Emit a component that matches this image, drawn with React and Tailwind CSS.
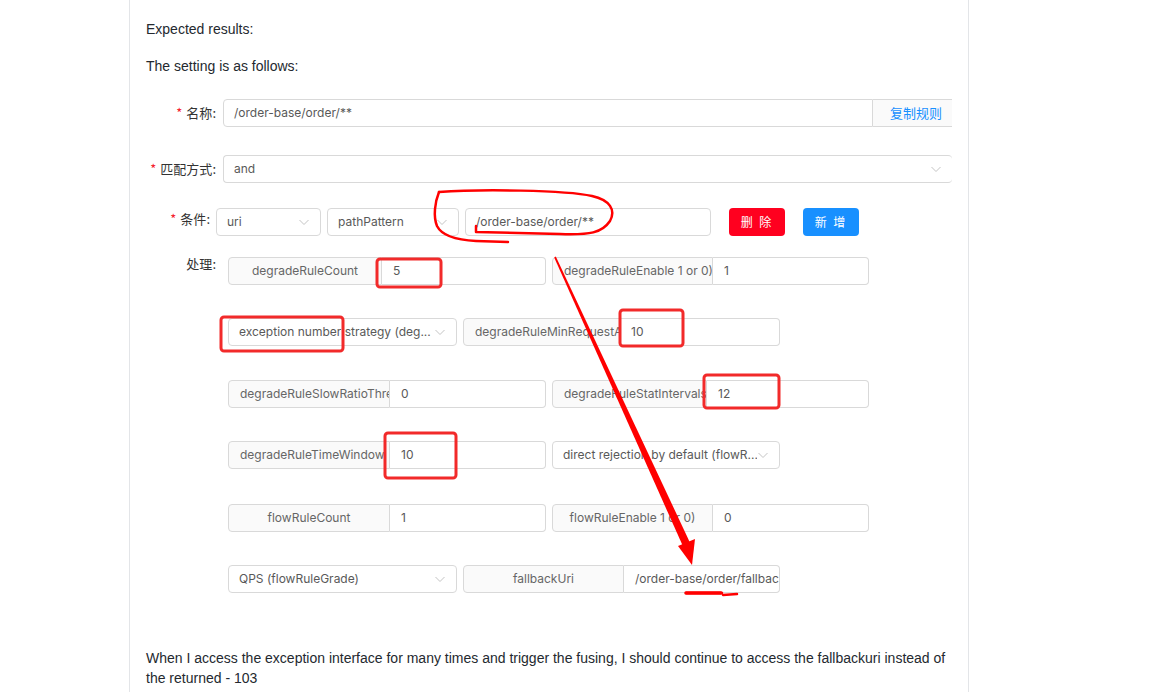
import React from 'react';

/**
 * Issue comment with an embedded rule-config screenshot and red markup on top
 */

const Chevron = () => (
  <svg width="12" height="12" viewBox="0 0 12 12" className="shrink-0">
    <path d="M1.5 4 L6 8.5 L10.5 4" fill="none" stroke="#c4c4c4" strokeWidth="1" />
  </svg>
);

function Select({ text, w, last }) {
  return (
    <div
      className={`${w} h-[28px] flex items-center justify-between bg-white border-[#d9d9d9] border-y border-l ${
        last ? '' : 'border-r'
      } rounded-[4px] pl-[10px] pr-[10px] text-[#595959] whitespace-nowrap overflow-hidden`}
    >
      <span className="overflow-hidden">{text}</span>
      <Chevron />
    </div>
  );
}

function Group({ label, value, lw, iw }) {
  return (
    <div className="flex h-[28px]">
      <div
        className={`${lw} h-full border border-[#d9d9d9] rounded-l-[4px] bg-[#fafafa] text-[#666] px-[11px] text-center whitespace-nowrap overflow-hidden leading-[26px]`}
      >
        {label}
      </div>
      <div
        className={`${iw} h-full border border-l-0 border-[#d9d9d9] rounded-r-[4px] bg-white text-[#595959] px-[11px] whitespace-nowrap overflow-hidden leading-[26px]`}
      >
        {value}
      </div>
    </div>
  );
}

function Label({ text, w, req = true }) {
  return (
    <div className={`${w} shrink-0 text-right text-[#333] font-['Noto_Sans_CJK_SC',sans-serif] text-[13px] whitespace-nowrap`}>
      {req && <span className="text-[#f5222d] mr-[4px]">*</span>}
      {text}:
    </div>
  );
}

function Markup() {
  return (
    <svg
      className="absolute inset-0 pointer-events-none"
      width="1169"
      height="692"
      viewBox="0 0 1169 692"
    >
      <g fill="none" stroke="#f22a2a" strokeWidth="3" strokeLinejoin="round">
        <rect x="377" y="259" width="64" height="28" rx="3" />
        <rect x="221" y="317" width="122" height="34" rx="3" />
        <rect x="620" y="310" width="63" height="36" rx="3" />
        <rect x="704" y="375" width="75" height="33" rx="3" />
        <rect x="385" y="433" width="71" height="45" rx="3" />
      </g>
      <g fill="none" stroke="#ff0000" strokeWidth="2.5" strokeLinecap="round" strokeLinejoin="round">
        <path d="M439 192 C435 202 433 216 437 226 C442 236 456 240 476 241 L508 242" />
        <path d="M439 192 C480 189 565 190 592 196 C610 200 616 210 610 221 C602 233 590 235 560 234 L476 232 L476 226" />
        <path d="M686 593 L722 593 M723 595 L737 594" />
      </g>
      <g fill="none" stroke="#ff0000" strokeWidth="3.5" strokeLinecap="round">
        <path d="M686 593 L721 593" />
      </g>
      <polygon points="555.8,256.6 692.7,548.4 685.3,551.6 554.2,257.4" fill="#ff0000" />
      <polygon points="692,565 695,539 678,546" fill="#ff0000" />
    </svg>
  );
}

export default function App() {
  return (
    <div className="relative w-[1169px] h-[692px] overflow-hidden bg-white">
      <div className="ml-[129px] w-[840px] h-full border-x border-[#e3e5e8] px-[16px] font-['Liberation_Sans',Arial,sans-serif] text-[14px] text-[#24292f]">
        <p className="pt-[18px] leading-[22px]">Expected results:</p>
        <p className="mt-[15px] leading-[22px]">The setting is as follows:</p>

        <div className="w-[806px] font-['Inter',sans-serif] text-[12px]">
          {/* 名称 */}
          <div className="flex items-center mt-[22px]">
            <Label text="名称" w="w-[70px]" />
            <div className="ml-[7px] flex flex-1 h-[28px]">
              <div className="w-[650px] h-full border border-[#d9d9d9] rounded-l-[4px] px-[10px] leading-[26px] text-[#595959]">
                /order-base/order/**
              </div>
              <div className="flex-1 h-full border-y border-[#d9d9d9] bg-[#fafafa] text-[#1890ff] font-['Noto_Sans_CJK_SC',sans-serif] text-[13px] leading-[26px] pl-[17px]">
                复制规则
              </div>
            </div>
          </div>

          {/* 匹配方式 */}
          <div className="flex items-center mt-[28px]">
            <Label text="匹配方式" w="w-[70px]" />
            <div className="ml-[7px] flex-1">
              <Select text="and" w="w-full" last />
            </div>
          </div>

          {/* 条件 */}
          <div className="flex items-start mt-[25px]">
            <div className="pt-[1px]">
              <Label text="条件" w="w-[64px]" />
            </div>
            <div className="ml-[6px] flex items-center gap-[6px]">
              <Select text="uri" w="w-[105px]" />
              <Select text="pathPattern" w="w-[132px]" />
              <div className="w-[246px] h-[28px] border border-[#d9d9d9] rounded-[4px] px-[10px] leading-[26px] text-[#595959]">
                /order-base/order/**
              </div>
              <button className="ml-[12px] w-[56px] h-[28px] rounded-[4px] bg-[#ff001f] text-white font-['Noto_Sans_CJK_SC',sans-serif] text-[12px] tracking-[2px]">
                删 除
              </button>
              <button className="ml-[12px] w-[56px] h-[28px] rounded-[4px] bg-[#1890ff] text-white font-['Noto_Sans_CJK_SC',sans-serif] text-[12px] tracking-[2px]">
                新 增
              </button>
            </div>
          </div>

          {/* 处理 */}
          <div className="flex items-start mt-[21px]">
            <div className="-mt-[3px]">
              <Label text="处理" w="w-[70px]" req={false} />
            </div>
            <div className="ml-[12px] flex flex-col">
              <div className="flex gap-[6px]">
                <Group label="degradeRuleCount" value="5" lw="w-[154px]" iw="w-[164px]" />
                <Group label="degradeRuleEnable 1 or 0)" value="1" lw="w-[161px]" iw="w-[156px]" />
              </div>
              <div className="flex gap-[6px] mt-[33px]">
                <Select text="exception number strategy (deg..." w="w-[229px]" />
                <Group label="degradeRuleMinRequestAmount" value="10" lw="w-[157px]" iw="w-[160px]" />
              </div>
              <div className="flex gap-[6px] mt-[34px]">
                <Group label="degradeRuleSlowRatioThreshold" value="0" lw="w-[162px]" iw="w-[156px]" />
                <Group label="degradeRuleStatIntervals" value="12" lw="w-[155px]" iw="w-[162px]" />
              </div>
              <div className="flex gap-[6px] mt-[33px]">
                <Group label="degradeRuleTimeWindow" value="10" lw="w-[162px]" iw="w-[156px]" />
                <Select text="direct rejection by default (flowR..." w="w-[228px]" />
              </div>
              <div className="flex gap-[6px] mt-[35px]">
                <Group label="flowRuleCount" value="1" lw="w-[162px]" iw="w-[156px]" />
                <Group label="flowRuleEnable 1 or 0)" value="0" lw="w-[161px]" iw="w-[156px]" />
              </div>
              <div className="flex gap-[6px] mt-[33px]">
                <Select text="QPS (flowRuleGrade)" w="w-[229px]" />
                <Group label="fallbackUri" value="/order-base/order/fallback" lw="w-[161px]" iw="w-[156px]" />
              </div>
            </div>
          </div>
        </div>

        <p className="mt-[55px] leading-[20px] w-[800px]">
          When I access the exception interface for many times and trigger the fusing, I should continue to access the fallbackuri instead of the returned - 103
        </p>
      </div>
      <Markup />
    </div>
  );
}
